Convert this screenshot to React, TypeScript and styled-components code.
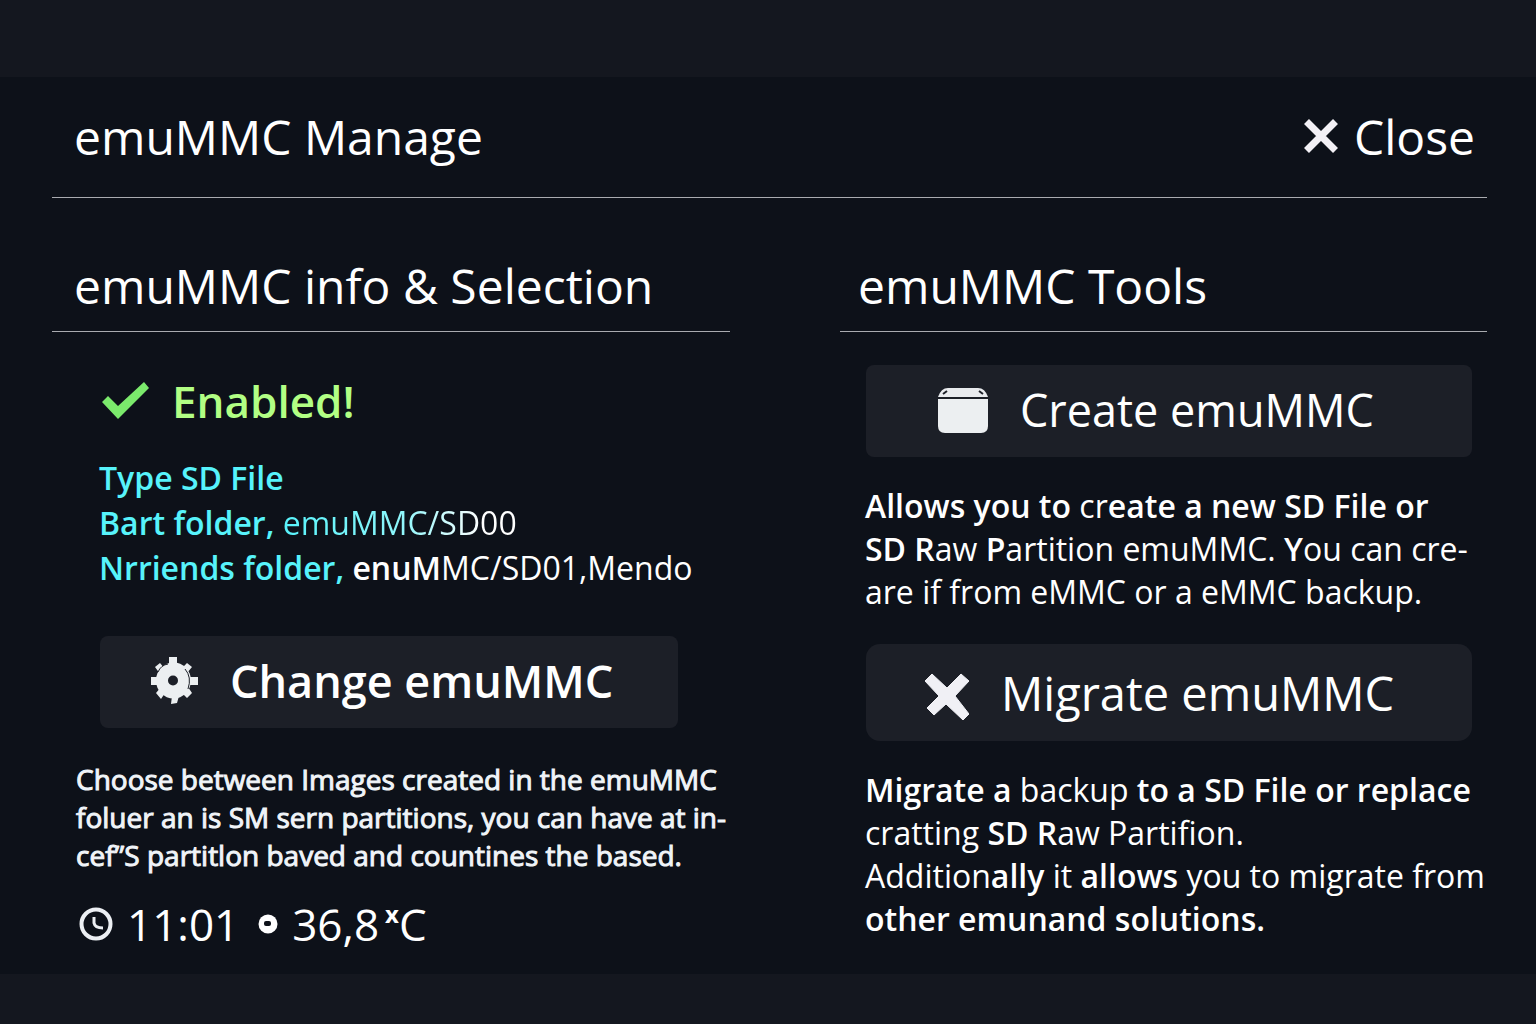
import React from "react";
import styled, { createGlobalStyle } from "styled-components";

const GlobalStyle = createGlobalStyle`
  * { box-sizing: border-box; }
  body {
    margin: 0;
    background: #14171f;
    color: #ffffff;
    font-family: "Open Sans", "Noto Sans", sans-serif;
  }
  h1, h2, p { margin: 0; font-weight: 400; }
`;

const Page = styled.div`
  min-height: 100vh;
  padding: 77px 0 50px;
  background: #14171f;
`;

const Panel = styled.main`
  padding: 0 49px 20px 52px;
  background: #0d1119;
`;

const Header = styled.header`
  display: flex;
  align-items: center;
  justify-content: space-between;
  padding: 28px 12px 28px 22px;
  border-bottom: 1px solid #a9abb0;
`;

const Title = styled.h1`
  font-size: 48px;
  line-height: 64px;
`;

const CloseButton = styled.button`
  display: flex;
  align-items: center;
  gap: 16px;
  padding: 0;
  border: 0;
  background: none;
  color: inherit;
  font: inherit;
  font-size: 48px;
  line-height: 64px;
  cursor: pointer;
`;

const Columns = styled.div`
  display: grid;
  grid-template-columns: 678fr 647fr;
  gap: 110px;
`;

const SectionTitle = styled.h2<{ $indent: number }>`
  padding: 56px 0 13px ${(p) => p.$indent}px;
  border-bottom: 1px solid #a9abb0;
  font-size: 48px;
  line-height: 64px;
  white-space: nowrap;
`;

const InfoBody = styled.div`
  display: flex;
  flex-direction: column;
  padding: 39px 0 0 24px;
`;

const ToolsBody = styled.div`
  display: flex;
  flex-direction: column;
  padding: 33px 0 0 25px;
`;

const Enabled = styled.div`
  display: flex;
  align-items: center;
  gap: 22px;
  padding-left: 26px;
  color: #b2ff84;
  font-size: 44px;
  font-weight: 600;
  line-height: 60px;
`;

const Details = styled.p`
  padding: 24px 0 0 23px;
  font-size: 32px;
  line-height: 45px;
  white-space: nowrap;

  b { font-weight: 600; }
`;

const Key = styled.b`
  color: #57f3fb;
`;

const FadingPath = styled.span`
  background: linear-gradient(90deg, #57f3fb 0%, #8df6fb 50%, #ffffff 85%);
  background-clip: text;
  color: transparent;
`;

const Action = styled.button<{ $inset: number; $large?: boolean; $strong?: boolean }>`
  display: flex;
  align-items: center;
  gap: 32px;
  height: ${(p) => (p.$large ? 97 : 92)}px;
  padding: 0 0 ${(p) => (p.$large ? 0 : 3)}px ${(p) => p.$inset}px;
  border: 0;
  border-radius: ${(p) => (p.$large ? 14 : 8)}px;
  background: #1c1f27;
  color: inherit;
  font: inherit;
  font-size: ${(p) => (p.$large ? 47 : 45)}px;
  font-weight: ${(p) => (p.$strong ? 600 : 400)};
  line-height: 64px;
  white-space: nowrap;
  cursor: pointer;

  svg { flex: none; }
`;

const ChangeAction = styled(Action)`
  margin: 46px 52px 0 24px;
`;

const ToolAction = styled(Action)`
  margin: 0 15px 0 1px;
`;

const Hint = styled.p`
  padding: 32px 0 20px;
  color: #f0f4f8;
  font-size: 28px;
  line-height: 38px;
  white-space: nowrap;
  -webkit-text-stroke: 1px #f0f4f8;
`;

const ToolText = styled.p`
  padding-top: 27px;
  font-size: 32px;
  line-height: 43px;
  white-space: nowrap;

  b { font-weight: 600; }
  & + button { margin-top: 31px; }
`;

const Status = styled.div`
  display: flex;
  align-items: center;
  font-size: 44px;
  line-height: 60px;
`;

const Reading = styled.span`
  display: flex;
  align-items: center;
  gap: 14px;
  padding: 0 16px 0 3px;
`;

const Mark = styled.span`
  align-self: flex-start;
  margin-left: -8px;
  font-size: 24px;
  font-weight: 700;
  line-height: 40px;
`;

const Unit = styled.span`
  margin-left: -14px;
`;

const CloseIcon = () => (
  <svg width="34" height="36" viewBox="0 0 34 36" aria-hidden="true">
    <path d="M2.5 2.5 31.5 31.5M31.5 2.5 2.5 31.5" stroke="#f3f1f6" strokeWidth="7" />
  </svg>
);

const CheckIcon = () => (
  <svg width="48" height="38" viewBox="0 0 48 38" aria-hidden="true">
    <path d="M0 20 6 14 16 24 42 0 47 6 16 37Z" fill="#7bea6c" />
  </svg>
);

const GearIcon = () => (
  <svg width="48" height="48" viewBox="0 -1 48 48" aria-hidden="true">
    <g fill="#eceff1">
      <path d="M19-1h8v7h-8zM21 46l1-8h7l-2 7zM1 19h8v8H1zM39 19h9v8h-9z" />
      <path d="M5 9 10 5 15 11 10 16ZM32 10 37 5 42 9 37 15ZM6 35 11 29 15 35 11 41ZM32 35 38 29 42 35 37 40Z" />
      <ellipse cx="23.500" cy="22.500" rx="17.500" ry="18" />
    </g>
    <path
      d="M8 14Q11 7 18 6M35 11Q42 19 38 31"
      fill="none"
      stroke="#1c1f27"
      strokeWidth="1"
    />
    <circle cx="23" cy="22.500" r="5" fill="#1c1f27" />
  </svg>
);

const BoxIcon = () => (
  <svg width="50" height="46" viewBox="0 0 50 46" aria-hidden="true">
    <path d="M0 10Q3 1 10 1H40Q47 1 50 10Z" fill="#e9ebee" />
    <path d="M0 12H50V39Q50 46 43 46H7Q0 46 0 39Z" fill="#eceff1" />
    <path d="M5 7 9 4M41 4 45 7" stroke="#1c1f27" strokeWidth="2" />
  </svg>
);

const CrossIcon = () => (
  <svg width="44" height="54" viewBox="0 0 44 54" aria-hidden="true">
    <path
      d="M7 8 22 22 36 8 44 15 30 30 44 48 38 54 21 38 9 49 2 42 14 30 0 15Z"
      fill="#f0f0f5"
      stroke="#f0f0f5"
      strokeLinejoin="round"
    />
  </svg>
);

const ClockIcon = () => (
  <svg width="34" height="34" viewBox="0 0 34 34" aria-hidden="true">
    <circle cx="17" cy="17" r="14.500" fill="none" stroke="#eceff3" strokeWidth="4" />
    <path d="M15 10v6q1 5 9 5" fill="none" stroke="#eceff3" strokeWidth="3" />
  </svg>
);

const SensorIcon = () => (
  <svg width="20" height="20" viewBox="0 0 20 20" aria-hidden="true">
    <circle cx="10" cy="10" r="9.500" fill="#ffffff" />
    <rect x="6" y="7" width="7" height="5" rx="2" fill="#0d1119" />
  </svg>
);

export default function App() {
  return (
    <>
      <GlobalStyle />
      <Page>
        <Panel>
          <Header>
            <Title>emuMMC Manage</Title>
            <CloseButton type="button">
              <CloseIcon />
              Close
            </CloseButton>
          </Header>

          <Columns>
            <section>
              <SectionTitle $indent={22}>emuMMC info &amp; Selection</SectionTitle>
              <InfoBody>
                <Enabled>
                  <CheckIcon />
                  Enabled!
                </Enabled>
                <Details>
                  <Key>Type SD File</Key>
                  <br />
                  <Key>Bart folder,</Key> <FadingPath>emuMMC/SD00</FadingPath>
                  <br />
                  <Key>Nrriends folder,</Key> <b>enuM</b>MC/SD01,Mendo
                </Details>
                <ChangeAction type="button" $inset={50} $strong>
                  <GearIcon />
                  Change emuMMC
                </ChangeAction>
                <Hint>
                  Choose between Images created in the emuMMC
                  <br />
                  foluer an is SM sern partitions, you can have at in-
                  <br />
                  cef”S partitlon baved and countines the based.
                </Hint>
                <Status>
                  <Reading>
                    <ClockIcon />
                    11:01
                  </Reading>
                  <Reading>
                    <SensorIcon />
                    36,8
                    <Mark>x</Mark>
                    <Unit>C</Unit>
                  </Reading>
                </Status>
              </InfoBody>
            </section>

            <section>
              <SectionTitle $indent={18}>emuMMC Tools</SectionTitle>
              <ToolsBody>
                <ToolAction type="button" $inset={72}>
                  <BoxIcon />
                  Create emuMMC
                </ToolAction>
                <ToolText>
                  <b>Allows you to</b> cr<b>eate a new SD File or</b>
                  <br />
                  <b>SD R</b>aw <b>P</b>artition emuMMC. <b>Y</b>ou can cre-
                  <br />
                  are if from eMMC or a eMMC backup.
                </ToolText>
                <ToolAction type="button" $inset={59} $large>
                  <CrossIcon />
                  Migrate emuMMC
                </ToolAction>
                <ToolText>
                  <b>Migrate a</b> backup <b>to a SD File or replace</b>
                  <br />
                  cratting <b>SD R</b>aw Partifion.
                  <br />
                  Addition<b>ally</b> it <b>allows</b> you to migrate from
                  <br />
                  <b>other emunand solutions.</b>
                </ToolText>
              </ToolsBody>
            </section>
          </Columns>
        </Panel>
      </Page>
    </>
  );
}
